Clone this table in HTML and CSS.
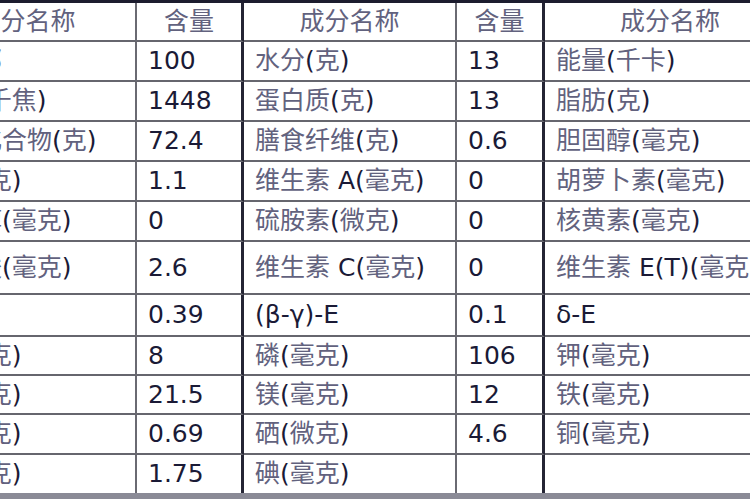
FILE: index.html
```html
<!DOCTYPE html>
<html lang="zh-CN">
<head>
<meta charset="utf-8">
<title>营养成分表</title>
<link rel="stylesheet" href="styles.css">
</head>
<body>
<div class="frame">
<table class="nutri">
  <colgroup>
    <col class="c-name1"><col class="c-val"><col class="c-name"><col class="c-val2"><col class="c-name5">
  </colgroup>
  <thead>
    <tr class="r-head">
      <th class="sep"><span class="h">成分名称</span></th>
      <th class="thick"><span class="h">含量</span></th>
      <th class="sep"><span class="h">成分名称</span></th>
      <th class="thick"><span class="h">含量</span></th>
      <th><span class="h">成分名称</span></th>
    </tr>
  </thead>
  <tbody>
    <tr class="r40">
      <td class="sep"><span class="h">可食部</span></td><td class="thick">100</td>
      <td class="sep"><span class="h">水分</span>(<span class="h">克</span>)</td><td class="thick">13</td>
      <td><span class="h">能量</span>(<span class="h">千卡</span>)</td>
    </tr>
    <tr class="r40">
      <td class="sep"><span class="h">能量</span>(<span class="h">千焦</span>)</td><td class="thick">1448</td>
      <td class="sep"><span class="h">蛋白质</span>(<span class="h">克</span>)</td><td class="thick">13</td>
      <td><span class="h">脂肪</span>(<span class="h">克</span>)</td>
    </tr>
    <tr class="r40">
      <td class="sep"><span class="h">碳水化合物</span>(<span class="h">克</span>)</td><td class="thick">72.4</td>
      <td class="sep"><span class="h">膳食纤维</span>(<span class="h">克</span>)</td><td class="thick">0.6</td>
      <td><span class="h">胆固醇</span>(<span class="h">毫克</span>)</td>
    </tr>
    <tr class="r40">
      <td class="sep"><span class="h">灰分</span>(<span class="h">克</span>)</td><td class="thick">1.1</td>
      <td class="sep"><span class="h">维生素</span> A(<span class="h">毫克</span>)</td><td class="thick">0</td>
      <td><span class="h">胡萝卜素</span>(<span class="h">毫克</span>)</td>
    </tr>
    <tr class="r40">
      <td class="sep"><span class="h">视黄醇</span>(<span class="h">毫克</span>)</td><td class="thick">0</td>
      <td class="sep"><span class="h">硫胺素</span>(<span class="h">微克</span>)</td><td class="thick">0</td>
      <td><span class="h">核黄素</span>(<span class="h">毫克</span>)</td>
    </tr>
    <tr class="r53">
      <td class="sep"><span class="h">尼克酸</span>(<span class="h">毫克</span>)</td><td class="thick">2.6</td>
      <td class="sep"><span class="h">维生素</span> C(<span class="h">毫克</span>)</td><td class="thick">0</td>
      <td><span class="h">维生素</span> E(T)(<span class="h">毫克</span>)</td>
    </tr>
    <tr class="r42">
      <td class="sep">α-E</td><td class="thick">0.39</td>
      <td class="sep">(β-γ)-E</td><td class="thick">0.1</td>
      <td>δ-E</td>
    </tr>
    <tr class="r39">
      <td class="sep"><span class="h">钙</span>(<span class="h">毫克</span>)</td><td class="thick">8</td>
      <td class="sep"><span class="h">磷</span>(<span class="h">毫克</span>)</td><td class="thick">106</td>
      <td><span class="h">钾</span>(<span class="h">毫克</span>)</td>
    </tr>
    <tr class="r39">
      <td class="sep"><span class="h">钠</span>(<span class="h">毫克</span>)</td><td class="thick">21.5</td>
      <td class="sep"><span class="h">镁</span>(<span class="h">毫克</span>)</td><td class="thick">12</td>
      <td><span class="h">铁</span>(<span class="h">毫克</span>)</td>
    </tr>
    <tr class="r40">
      <td class="sep"><span class="h">锌</span>(<span class="h">毫克</span>)</td><td class="thick">0.69</td>
      <td class="sep"><span class="h">硒</span>(<span class="h">微克</span>)</td><td class="thick">4.6</td>
      <td><span class="h">铜</span>(<span class="h">毫克</span>)</td>
    </tr>
    <tr class="r40 last">
      <td class="sep"><span class="h">锰</span>(<span class="h">毫克</span>)</td><td class="thick">1.75</td>
      <td class="sep"><span class="h">碘</span>(<span class="h">毫克</span>)</td><td class="thick"></td>
      <td></td>
    </tr>
  </tbody>
</table>
</div>
</body>
</html>
```

FILE: styles.css
```css
html, body {
  margin: 0;
  padding: 0;
  background: #ffffff;
  overflow: hidden;
}

.frame {
  width: 750px;
  height: 500px;
  overflow: hidden;
}

.nutri {
  margin-left: -84px;
  width: 879px;
  table-layout: fixed;
  border-collapse: separate;
  border-spacing: 0;
  border-top: 3px solid #1c1c2e;
  border-bottom: 6px solid #8a8a96;
  font-family: "DejaVu Sans", "Noto Sans CJK SC", sans-serif;
  font-size: 25px;
  color: #1a1a36;
}

.c-name1 { width: 221px; }
.c-val { width: 107px; }
.c-name { width: 213px; }
.c-val2 { width: 88px; }
.c-name5 { width: 250px; }

.nutri th,
.nutri td {
  box-sizing: border-box;
  padding: 0 0 0 11px;
  border-bottom: 2px solid #66666e;
  vertical-align: middle;
  white-space: nowrap;
  overflow: hidden;
  line-height: 28px;
  text-align: left;
}

.nutri th {
  font-weight: normal;
  text-align: center;
  padding: 0;
}

.nutri .sep { border-right: 2px solid #6a6a72; }
.nutri .thick { border-right: 3px solid #242434; }

.nutri tr.last td { border-bottom: none; }

.h {
  color: #62627e;
}

.r-head { height: 39px; }
.r40 { height: 40px; }
.r42 { height: 42px; }
.r39 { height: 39px; }
.r53 { height: 53px; }
.last { height: 38px; }
```
